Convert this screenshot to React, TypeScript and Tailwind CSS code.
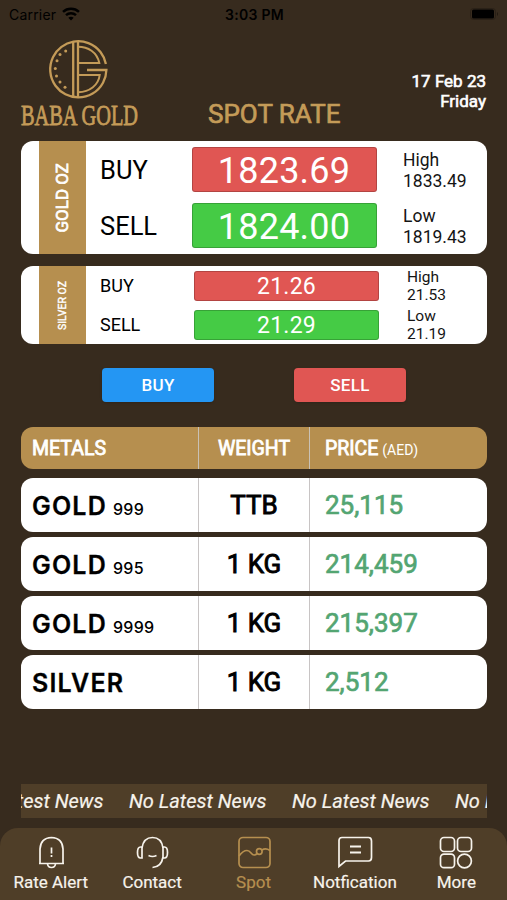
import type { ReactNode } from 'react'
import clsx from 'clsx'

interface Quote {
  name: string
  buy: string
  sell: string
  high: string
  low: string
}

interface MetalRow {
  metal: string
  purity?: string
  weight: string
  price: string
}

const GOLD: Quote = { name: 'GOLD OZ', buy: '1823.69', sell: '1824.00', high: '1833.49', low: '1819.43' }
const SILVER: Quote = { name: 'SILVER OZ', buy: '21.26', sell: '21.29', high: '21.53', low: '21.19' }

const METALS: MetalRow[] = [
  { metal: 'GOLD', purity: '999', weight: 'TTB', price: '25,115' },
  { metal: 'GOLD', purity: '995', weight: '1 KG', price: '214,459' },
  { metal: 'GOLD', purity: '9999', weight: '1 KG', price: '215,397' },
  { metal: 'SILVER', weight: '1 KG', price: '2,512' },
]

function StatusBar() {
  return (
    <div className="grid h-7 shrink-0 grid-cols-3 items-center pl-[9px] pr-[7px] font-['Inter',sans-serif] text-[14px] text-black">
      <div className="flex items-center gap-1.5">
        <span className="tracking-[0.2px]">Carrier</span>
        <svg width="18" height="14" viewBox="0 0 18 14" fill="none" stroke="currentColor" strokeWidth="2.5">
          <path d="M1 4.8C5.5.6 12.5.6 17 4.8" />
          <path d="M4 8.2C6.8 5.6 11.2 5.6 14 8.2" />
          <path d="M9 13.5 6.3 10.8Q9 8.6 11.7 10.8Z" fill="currentColor" stroke="none" />
        </svg>
      </div>
      <div className="text-center font-semibold tracking-[0.3px]">3:03 PM</div>
      <div className="flex justify-end">
        <svg width="30" height="12" viewBox="0 0 30 12">
          <rect x="0.5" y="0.5" width="25" height="11" rx="3" fill="none" stroke="#2a2117" />
          <rect x="2" y="1.5" width="22" height="9" rx="1.5" fill="#000" />
          <path d="M27 4v4q2-2 0-4" fill="#211a12" />
        </svg>
      </div>
    </div>
  )
}

function Logo() {
  return (
    <svg width="119" height="90" viewBox="0 0 119 90" className="overflow-visible text-[#c49b58]">
      <g fill="none" stroke="currentColor" strokeWidth="2.3">
        <path d="M84.9 26A28.1 28.1 0 1 0 85.4 32H66" />
        <path d="M52.2 4V59M57 4V59" />
        <path d="M57 8.7C67 8.7 76 14 78.3 25H58" strokeWidth="2" />
        <path d="M57 37H78.7C77.5 47 69 54 57 54.3" strokeWidth="2" />
      </g>
      <g fill="currentColor">
        <circle cx="44.7" cy="13" r="1.5" />
        <circle cx="39" cy="16.6" r="1.5" />
        <circle cx="36" cy="22.8" r="1.5" />
        <circle cx="34.3" cy="30.5" r="1.5" />
        <circle cx="35.5" cy="38" r="1.5" />
        <circle cx="39" cy="44" r="1.5" />
        <circle cx="44" cy="49.3" r="1.5" />
      </g>
      <text
        x="0"
        y="86.5"
        textLength="117"
        lengthAdjust="spacingAndGlyphs"
        fill="currentColor"
        stroke="currentColor"
        strokeWidth="0.8"
        fontSize="29"
        fontFamily="'Liberation Serif', serif"
      >
        BABA GOLD
      </text>
    </svg>
  )
}

function QuoteCard({ quote, large = false }: { quote: Quote; large?: boolean }) {
  const lines = [
    { label: 'BUY', value: quote.buy, range: 'High', extreme: quote.high, color: 'bg-[#e05653]' },
    { label: 'SELL', value: quote.sell, range: 'Low', extreme: quote.low, color: 'bg-[#45cb45]' },
  ]

  return (
    <section
      className={clsx(
        'flex shrink-0 overflow-hidden rounded-[12px] bg-white pl-[18px] text-[#141414]',
        large ? 'h-[113px]' : 'h-[78px]'
      )}
    >
      <div className="flex w-[47px] items-center justify-center bg-[#b68f4f]">
        <span
          className={clsx(
            'rotate-180 whitespace-nowrap text-white [writing-mode:vertical-rl]',
            large
              ? 'text-[17px] [-webkit-text-stroke:0.7px]'
              : 'text-[10.5px] [-webkit-text-stroke:0.4px]'
          )}
        >
          {quote.name}
        </span>
      </div>
      <div className="flex flex-1 flex-col">
        {lines.map((line) => (
          <div key={line.label} className="flex flex-1 items-center pl-[14px]">
            <span
              className={clsx(
                'text-black',
                large ? 'w-[91.5px] pt-px text-[25.5px]' : 'w-[94px] text-[18px]'
              )}
            >
              {line.label}
            </span>
            <span
              className={clsx(
                'flex w-[185px] items-center justify-center rounded-[3px] border border-black/20 text-white',
                line.color,
                large ? 'h-[45px] pt-[3px] text-[36px] tracking-[0.2px]' : 'h-[30px] pt-[3px] text-[23px] tracking-[0.2px]'
              )}
            >
              {line.value}
            </span>
            <span
              className={clsx(
                'flex flex-col',
                large
                  ? 'ml-[26.5px] pt-[3px] text-[17.5px] leading-[21px]'
                  : 'ml-[28px] pt-px text-[15.5px] leading-[18px]'
              )}
            >
              <span>{line.range}</span>
              <span>{line.extreme}</span>
            </span>
          </div>
        ))}
      </div>
    </section>
  )
}

function MetalsTable() {
  const columns = 'grid grid-cols-[178px_111px_1fr] overflow-hidden rounded-[12px]'

  return (
    <section className="mt-[25px] shrink-0">
      <div className={clsx(columns, 'h-[42px] bg-[#b68f4f] text-[19.5px] text-white')}>
        <div className="flex items-center border-r border-[#c9c1b5] pt-[2px] pl-[11px] [-webkit-text-stroke:0.8px]">
          METALS
        </div>
        <div className="flex items-center justify-center border-r border-[#c9c1b5] pt-[2px] [-webkit-text-stroke:0.8px]">
          WEIGHT
        </div>
        <div className="flex items-center pt-[2px] pl-[15px]">
          <span>
            <span className="[-webkit-text-stroke:0.8px]">PRICE</span>{' '}
            <span className="-ml-px text-[14px]">(AED)</span>
          </span>
        </div>
      </div>
      <div className="mt-[9px] flex flex-col gap-[5px]">
        {METALS.map((row) => (
          <div
            key={row.metal + (row.purity ?? '')}
            className={clsx(columns, 'h-[54px] grid-rows-[54px] bg-white text-[26px] text-black')}
          >
            <div className="flex items-baseline gap-[6px] border-r border-[#c8c4c4] pl-[11px] font-['Inter',sans-serif] leading-[56px]">
              <span className="text-[25px] font-semibold tracking-[1.2px] [-webkit-text-stroke:0.3px]">{row.metal}</span>
              {row.purity && <span className="text-[16px] font-medium tracking-[0.3px]">{row.purity}</span>}
            </div>
            <div className="flex items-center justify-center border-r border-[#c8c4c4] [-webkit-text-stroke:0.9px]">
              {row.weight}
            </div>
            <div className="flex items-center pl-[15px] text-[#53a572] [-webkit-text-stroke:0.7px]">{row.price}</div>
          </div>
        ))}
      </div>
    </section>
  )
}

function NewsTicker() {
  return (
    <div className="mt-[75px] flex h-[34px] shrink-0 items-center overflow-hidden bg-[#4f3e28] text-[20px] text-[#f7f3ec] italic">
      <div className="-ml-[55px] flex shrink-0 whitespace-nowrap">
        {[0, 1, 2, 3].map((i) => (
          <span key={i} className="w-[163px] shrink-0 [-webkit-text-stroke:0.2px]">
            No Latest News
          </span>
        ))}
      </div>
    </div>
  )
}

function TabItem({ label, active, children }: { label: string; active?: boolean; children: ReactNode }) {
  return (
    <button
      type="button"
      className={clsx('flex flex-1 flex-col items-center pt-[8px]', active ? 'text-[#b68f4f]' : 'text-[#f7f3ec]')}
    >
      <svg width="36" height="34" viewBox="0 0 36 34" fill="none" stroke="currentColor" strokeWidth="1.7">
        {children}
      </svg>
      <span className="mt-px text-[17px] leading-[22px] whitespace-nowrap [-webkit-text-stroke:0.2px]">{label}</span>
    </button>
  )
}

function TabBar() {
  return (
    <nav className="flex h-[72px] shrink-0 rounded-t-[18px] bg-[#4f3e28]">
      <TabItem label="Rate Alert">
        <path d="M7 27V13Q7.5 2 18.5 1.5Q29.5 2 30 13V27" />
        <path d="M6 27.5H31M14.5 28Q15 31.5 18.5 31.5Q22 31.5 22.5 28" />
        <path d="M18.5 11.5V17.5M18.5 19V21" />
      </TabItem>
      <TabItem label="Contact">
        <path d="M8 12C9 5 13 1.5 18.5 1.5S28 5 29 12M29 21C28 27.5 25 31 18.5 31.5" />
        <path d="M8 11H6.5Q3.5 11 3.5 16.500T6.5 22H8ZM29 11H30.5Q33.5 11 33.5 16.500T30.5 22H29Z" />
        <path d="M14.5 19.5Q18.5 21.5 22.5 19.5" />
      </TabItem>
      <TabItem label="Spot" active>
        <rect x="3" y="1.5" width="31" height="30" rx="4" />
        <path d="M3 20Q7 14.5 11 14.5C15 14.5 15 19 18 19Q20 19 21 17.5" />
        <circle cx="23.3" cy="15.5" r="2.8" />
        <path d="M26 14Q29.5 11.5 34 14.5" />
      </TabItem>
      <TabItem label="Notfication">
        <path d="M2 30.500V4.5Q2 1.5 5 1.5H31.5Q34.5 1.5 34.5 5V21.500Q34.5 25 31.5 25H8.5Z" />
        <path d="M13 10.5H24M13 16.5H24" strokeWidth="2" />
      </TabItem>
      <TabItem label="More">
        <rect x="2.5" y="1.5" width="14" height="14" rx="3.5" />
        <rect x="19.5" y="1.5" width="14" height="14" rx="3.5" />
        <rect x="2.5" y="18.2" width="14" height="13.5" rx="3.5" />
        <circle cx="26.5" cy="25" r="6.9" />
      </TabItem>
    </nav>
  )
}

export default function App() {
  return (
    <div className="flex h-[900px] w-[507px] flex-col overflow-hidden bg-[#372b1e] font-['Roboto',sans-serif]">
      <StatusBar />
      <main className="flex flex-1 flex-col pl-[21px] pr-[20px]">
        <header className="flex h-[113px] shrink-0 items-start">
          <div className="mt-[10px] w-[118px]">
            <Logo />
          </div>
          <h1 className="mt-[71px] flex-1 pl-[69px] text-[26px] leading-[30px] whitespace-nowrap text-[#c49b58] [-webkit-text-stroke:0.7px]">
            SPOT RATE
          </h1>
          <p className="mt-[44px] pr-px text-right text-[17px] leading-[19.5px] text-white [-webkit-text-stroke:0.6px]">
            17 Feb 23
            <br />
            Friday
          </p>
        </header>

        <QuoteCard quote={GOLD} large />
        <div className="mt-3 flex flex-col">
          <QuoteCard quote={SILVER} />
        </div>

        {/* Trade actions */}
        <div className="mt-6 flex shrink-0 gap-20 pl-[81px] text-[17px] font-medium tracking-[0.3px] text-white">
          <button type="button" className="h-[34px] w-[112px] rounded-[4px] bg-[#2496f3] pt-px shadow-sm">
            BUY
          </button>
          <button type="button" className="h-[34px] w-[112px] rounded-[4px] bg-[#e05653] pt-px shadow-sm">
            SELL
          </button>
        </div>

        <MetalsTable />
        <NewsTicker />
      </main>
      <TabBar />
    </div>
  )
}
